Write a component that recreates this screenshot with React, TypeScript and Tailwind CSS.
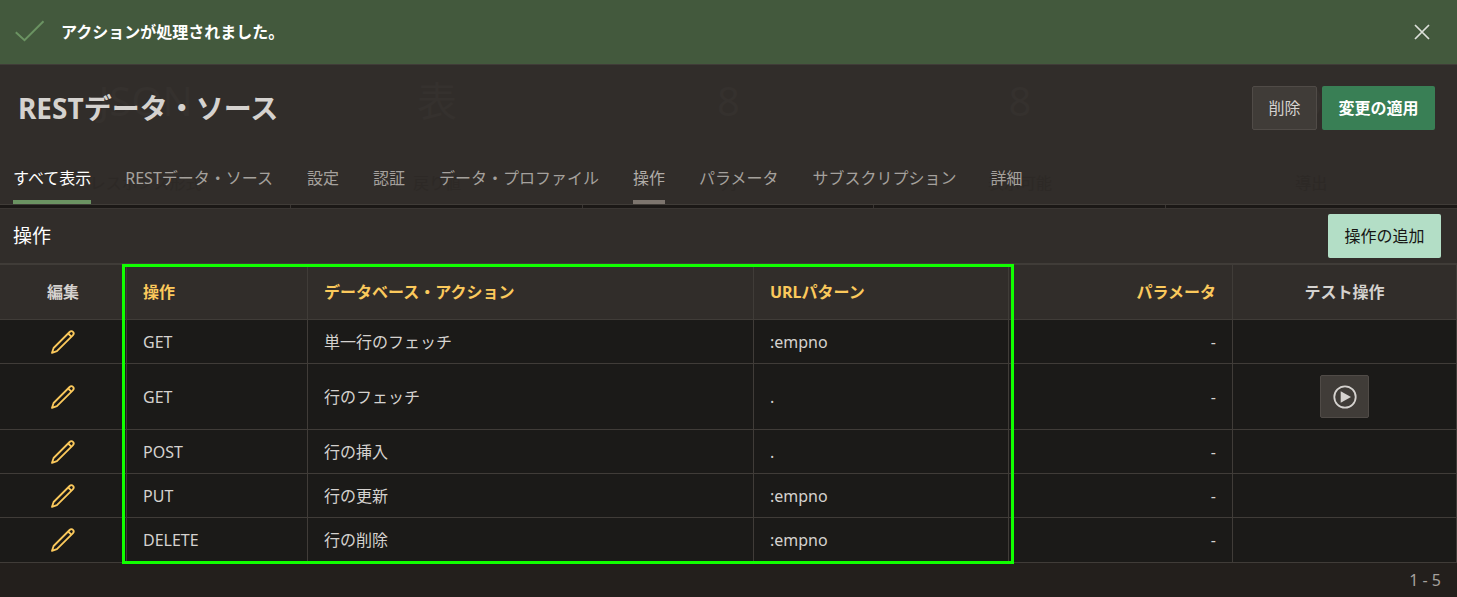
import type { ReactNode } from "react";

type Tab = { label: string; state?: "active" | "current" };
type Operation = { method: string; action: string; url: string; testable?: boolean };

const tabs: Tab[] = [
  { label: "すべて表示", state: "active" },
  { label: "RESTデータ・ソース" },
  { label: "設定" },
  { label: "認証" },
  { label: "データ・プロファイル" },
  { label: "操作", state: "current" },
  { label: "パラメータ" },
  { label: "サブスクリプション" },
  { label: "詳細" },
];

const operations: Operation[] = [
  { method: "GET", action: "単一行のフェッチ", url: ":empno" },
  { method: "GET", action: "行のフェッチ", url: ".", testable: true },
  { method: "POST", action: "行の挿入", url: "." },
  { method: "PUT", action: "行の更新", url: ":empno" },
  { method: "DELETE", action: "行の削除", url: ":empno" },
];

const profileStats = [
  { value: "JSON", label: "レスポンス形式" },
  { value: "表", label: "戻り値" },
  { value: "8", label: "列" },
  { value: "8", label: "表示可能" },
  { value: "0", label: "導出" },
];

function PencilIcon() {
  return (
    <svg width="24" height="24" viewBox="0 0 24 24" fill="none" stroke="#fbc95c" strokeWidth="1.8" strokeLinejoin="round" aria-hidden="true">
      <path d="M1 22.9 L2.6 18 L18.6 2 C19.7 0.9 21.1 0.9 22 1.9 C22.9 2.8 22.9 4.2 21.8 5.3 L5.9 21.2 Z" />
      <path d="M17.2 3.5 L20.3 6.7" />
    </svg>
  );
}

function PlayIcon() {
  return (
    <svg width="24" height="24" viewBox="0 0 24 24" aria-hidden="true">
      <circle cx="12" cy="12" r="10.7" fill="none" stroke="#d5d2cf" strokeWidth="1.8" />
      <path d="M7.7 6.3 L18 12 L7.7 17.7 Z" fill="#d5d2cf" />
    </svg>
  );
}

function SuccessBanner() {
  return (
    <div role="status" className="flex h-16 items-center bg-[#43593d] pr-6 pl-[14px]">
      <svg width="32" height="32" viewBox="0 0 32 32" fill="none" stroke="#6b9362" strokeWidth="2" aria-hidden="true">
        <path d="M1.8 16.2 L10.5 24.2 L29.5 5.2" />
      </svg>
      <p className="ml-[15px] flex-1 font-bold text-white">アクションが処理されました。</p>
      <button type="button" aria-label="閉じる" className="flex size-[22px] items-center justify-center">
        <svg width="16" height="16" viewBox="0 0 16 16" stroke="#dde0da" strokeWidth="1.7" aria-hidden="true">
          <path d="M1 1 L15 15 M15 1 L1 15" />
        </svg>
      </button>
    </div>
  );
}

function ScrolledSummary() {
  return (
    <div aria-hidden="true" className="absolute inset-0 grid grid-cols-5 overflow-hidden text-center">
      {profileStats.map((s, i) => (
        <div key={i} className="pt-[10px]">
          <div className="text-[40px] leading-[52px] text-[#35312e]">{s.value}</div>
          <div className="mt-11 leading-6 text-[#2d2926]">{s.label}</div>
        </div>
      ))}
    </div>
  );
}

function PageHeader() {
  return (
    <header className="relative border-t border-b border-[#403c38] bg-[#312d2a]">
      <ScrolledSummary />
      <div className="relative flex items-center justify-between pt-[21px] pr-[22px] pl-[18px]">
        <h1 className="text-[28px] leading-10 font-bold text-[#d5d2cf]">RESTデータ・ソース</h1>
        <div className="flex gap-[5px]">
          <button type="button" className="h-11 w-[65px] rounded-xs border border-[#504b47] bg-[#403c38] text-[#d5d2cf]">
            削除
          </button>
          <button type="button" className="h-11 w-[113px] rounded-xs bg-[#397f55] font-bold text-white">
            変更の適用
          </button>
        </div>
      </div>
      <nav className="relative mt-[22px] flex gap-[34px] pl-[13px]">
        {tabs.map((t) => (
          <a
            key={t.label}
            href="#operations"
            className={
              t.state === "active"
                ? "flex h-[52px] items-center border-b-4 border-[#6b9362] pt-1 whitespace-nowrap text-white"
                : t.state === "current"
                  ? "flex h-[52px] items-center border-b-4 border-[#7d756e] pt-1 whitespace-nowrap text-[#b0aca8]"
                  : "flex h-[52px] items-center border-b-4 border-transparent pt-1 whitespace-nowrap text-[#a5a19d]"
            }
          >
            {t.label}
          </a>
        ))}
      </nav>
    </header>
  );
}

function SummaryEdge() {
  return (
    <div aria-hidden="true" className="grid h-[3px] grid-cols-5 bg-[#1b1816]">
      {profileStats.map((_, i) => (
        <div key={i} className="border-r border-[#3a3633] last:border-r-0" />
      ))}
    </div>
  );
}

function HeadCell({ children, className }: { children: ReactNode; className: string }) {
  return (
    <th scope="col" className={`h-[55px] border-r border-b border-[#403c38] px-4 font-bold ${className}`}>
      {children}
    </th>
  );
}

function Cell({ children, className = "" }: { children?: ReactNode; className?: string }) {
  return <td className={`border-r border-b border-[#403c38] px-4 ${className}`}>{children}</td>;
}

export default function App() {
  return (
    <div className="min-h-screen bg-[#231f1c] font-['Noto_Sans','Noto_Sans_CJK_JP',sans-serif] text-base text-[#d5d2cf]">
      <SuccessBanner />
      <PageHeader />
      <SummaryEdge />
      <section id="operations">
        <div className="flex items-center justify-between border-t border-b-2 border-t-[#3a3633] border-b-[#403c38] bg-[#312d2a] py-[5px] pr-4 pl-[13px]">
          <h2 className="text-[19px] leading-7 text-white">操作</h2>
          <button type="button" className="h-11 w-[113px] rounded-xs bg-[#b3dec6] text-[#161513]">
            操作の追加
          </button>
        </div>
        <div className="relative">
          <table className="w-full table-fixed border-separate border-spacing-0 bg-[#1b1a18] text-left">
            <colgroup>
              <col className="w-[127px]" />
              <col className="w-[181px]" />
              <col />
              <col className="w-[255px]" />
              <col className="w-[224px]" />
              <col className="w-[224px]" />
            </colgroup>
            <thead className="bg-[#312d2a]">
              <tr>
                <HeadCell className="text-center">編集</HeadCell>
                <HeadCell className="text-[#fbc95c]">操作</HeadCell>
                <HeadCell className="text-[#fbc95c]">データベース・アクション</HeadCell>
                <HeadCell className="text-[#fbc95c]">URLパターン</HeadCell>
                <HeadCell className="text-right text-[#fbc95c]">パラメータ</HeadCell>
                <HeadCell className="text-center">テスト操作</HeadCell>
              </tr>
            </thead>
            <tbody>
              {operations.map((op, i) => (
                <tr key={i} className={op.testable ? "h-[66px]" : "h-11 last:h-[45px]"}>
                  <Cell>
                    <a href="#edit" aria-label={`${op.method}の編集`} className="flex justify-center">
                      <PencilIcon />
                    </a>
                  </Cell>
                  <Cell>{op.method}</Cell>
                  <Cell>{op.action}</Cell>
                  <Cell>{op.url}</Cell>
                  <Cell className="text-right">-</Cell>
                  <Cell>
                    {op.testable && (
                      <button
                        type="button"
                        aria-label="テスト"
                        className="mx-auto flex h-[43px] w-[49px] items-center justify-center rounded-xs border border-[#504b47] bg-[#403c38]"
                      >
                        <PlayIcon />
                      </button>
                    )}
                  </Cell>
                </tr>
              ))}
            </tbody>
          </table>
          <div className="pointer-events-none absolute -top-px right-[443px] -bottom-px left-[122px] border-3 border-[#11ff00]" />
        </div>
        <p className="px-4 py-[5px] text-right leading-6 text-[#a5a19d]">1 - 5</p>
      </section>
    </div>
  );
}
